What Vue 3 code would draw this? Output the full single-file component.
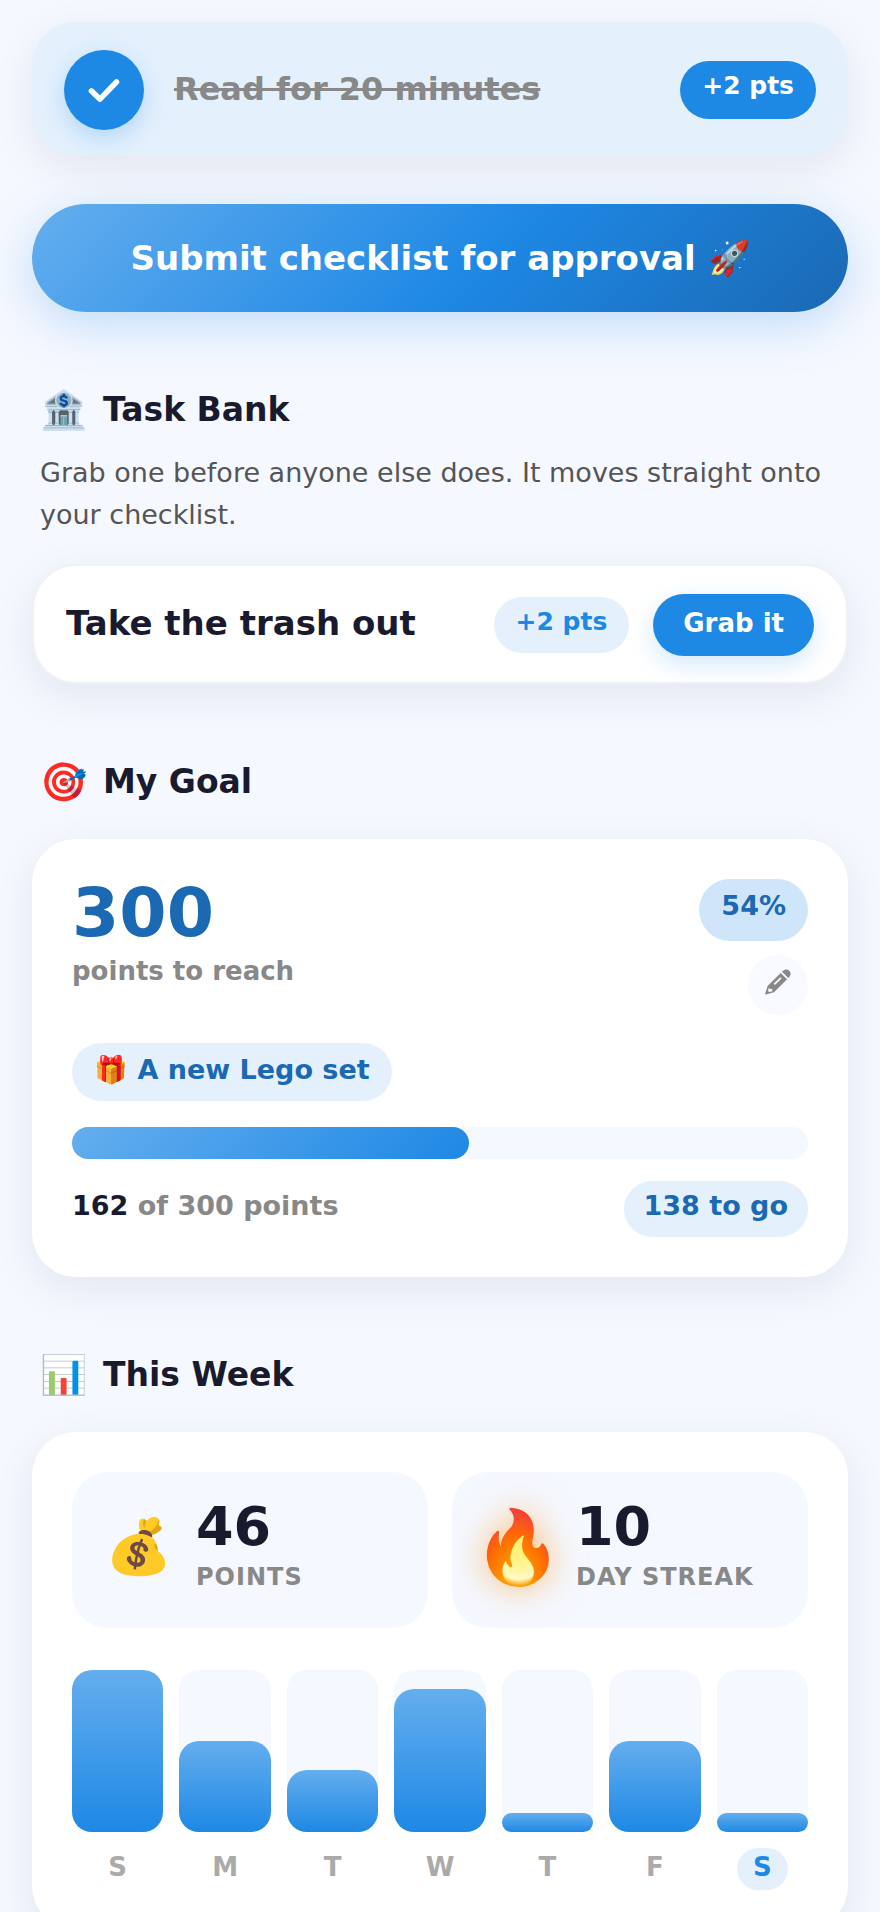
<script setup>
import { computed, ref } from 'vue'

const done = ref(true)

const goal = ref({ target: 300, earned: 162, reward: 'A new Lego set' })

const percent = computed(() => Math.round((goal.value.earned / goal.value.target) * 100))
const remaining = computed(() => goal.value.target - goal.value.earned)

const days = [
  { id: 'sun', label: 'S', fill: 100 },
  { id: 'mon', label: 'M', fill: 56 },
  { id: 'tue', label: 'T', fill: 38 },
  { id: 'wed', label: 'W', fill: 88 },
  { id: 'thu', label: 'T', fill: 12 },
  { id: 'fri', label: 'F', fill: 56 },
  { id: 'sat', label: 'S', fill: 12, today: true }
]
</script>

<template>
  <main class="page">
    <div class="task" :class="{ done }">
      <button class="check" type="button" aria-label="Toggle Read for 20 minutes" @click="done = !done">
        <svg v-if="done" viewBox="0 0 32 32" width="32" height="32" aria-hidden="true">
          <path d="M3.500 17 L12 25.200 L28.500 8" fill="none" stroke="#fff" stroke-width="5.500" stroke-linecap="round" stroke-linejoin="round" />
        </svg>
      </button>
      <span class="taskTitle">Read for 20 minutes</span>
      <span class="points">+2 pts</span>
    </div>

    <button class="submit" type="button">Submit checklist for approval 🚀</button>

    <section class="section">
      <h2 class="heading"><span class="emoji">🏦</span>Task Bank</h2>
      <p class="hint">Grab one before anyone else does. It moves straight onto your checklist.</p>
      <div class="bankItem">
        <span class="bankTitle">Take the trash out</span>
        <span class="points light">+2 pts</span>
        <button class="grab" type="button">Grab it</button>
      </div>
    </section>

    <section class="section">
      <h2 class="heading"><span class="emoji">🎯</span>My Goal</h2>
      <div class="card">
        <div class="goalTop">
          <div>
            <div class="goalNumber">{{ goal.target }}</div>
            <div class="goalCaption">points to reach</div>
          </div>
          <div class="goalSide">
            <span class="percent">{{ percent }}%</span>
            <button class="edit" type="button" aria-label="Edit goal">
              <svg viewBox="0 0 26 26" width="26" height="26" aria-hidden="true">
                <path fill="#888" d="M17.800 2 C19.800 -.2 22.500 0 24.300 1.800 C26 3.500 26.200 6 24.200 8 L23.300 8.900 L17 2.800 Z" />
                <path fill="#888" fill-rule="evenodd" d="M15.700 4.100 L22 10.300 L9 23.200 L.8 25.600 C.3 25.700 0 25.400 .1 24.900 L2.600 17 Z M3.800 19 L3 22 L4.200 23.100 L7.400 22.300 L7.200 20 L5.400 19.900 Z M8.600 14.800 L9.900 16 L16.600 9.400 L15.400 8.200 Z" />
              </svg>
            </button>
          </div>
        </div>
        <div class="reward">🎁 {{ goal.reward }}</div>
        <div class="progress" role="progressbar" :aria-valuenow="percent" aria-valuemin="0" aria-valuemax="100">
          <div class="progressFill" :style="{ width: percent + '%' }"></div>
        </div>
        <div class="goalFoot">
          <span class="earned"><strong>{{ goal.earned }}</strong> of {{ goal.target }} points</span>
          <span class="toGo">{{ remaining }} to go</span>
        </div>
      </div>
    </section>

    <section class="section">
      <h2 class="heading"><span class="emoji">📊</span>This Week</h2>
      <div class="card">
        <div class="stats">
          <div class="stat">
            <span class="statIcon">💰</span>
            <div>
              <div class="statValue">46</div>
              <div class="statLabel">Points</div>
            </div>
          </div>
          <div class="stat">
            <span class="statIcon fire">🔥</span>
            <div>
              <div class="statValue">10</div>
              <div class="statLabel">Day streak</div>
            </div>
          </div>
        </div>
        <div class="chart">
          <div v-for="day in days" :key="day.id" class="day">
            <div class="track">
              <div class="bar" :style="{ height: day.fill + '%' }"></div>
            </div>
            <span class="dayLabel" :class="{ today: day.today }">{{ day.label }}</span>
          </div>
        </div>
      </div>
    </section>
  </main>
</template>

<style>
body {
  margin: 0;
  background: #f5f8ff;
}
</style>

<style scoped>
.page {
  box-sizing: border-box;
  min-height: 100vh;
  padding: 22px 32px 0;
  font-family: 'DejaVu Sans', sans-serif;
  color: #1a1a2e;
}

button {
  border: none;
  padding: 0;
  font-family: inherit;
  font-weight: 700;
  cursor: pointer;
}

.task {
  display: flex;
  align-items: center;
  gap: 30px;
  padding: 28px 32px 26px;
  border-radius: 44px;
  background: #fff;
  box-shadow: 0 12px 40px rgba(26, 26, 46, 0.08);
}

.task.done {
  background: #e4f1fd;
}

.check {
  display: flex;
  align-items: center;
  justify-content: center;
  width: 80px;
  height: 80px;
  flex-shrink: 0;
  border-radius: 50%;
  background: #1e88e5;
  box-shadow: 0 8px 24px rgba(30, 136, 229, 0.25);
}

.taskTitle {
  flex: 1;
  padding-bottom: 2px;
  font-size: 32px;
  font-weight: 700;
}

.done .taskTitle {
  color: #888;
  text-decoration: line-through;
}

.points {
  padding: 9px 22px 17px;
  border-radius: 40px;
  background: #1e88e5;
  color: #fff;
  font-size: 25px;
  font-weight: 700;
  line-height: 32px;
}

.points.light {
  padding-bottom: 15px;
  background: #e4f1fd;
  color: #1e88e5;
}

.submit {
  display: block;
  width: 100%;
  margin-top: 48px;
  padding: 32px;
  border-radius: 54px;
  background: linear-gradient(135deg, #64aeee 0%, #1e88e5 55%, #1b69b3 100%);
  box-shadow: 0 12px 48px rgba(30, 136, 229, 0.25);
  color: #fff;
  font-size: 34px;
  line-height: 44px;
}

.section {
  margin-top: 73px;
}

.heading {
  display: flex;
  align-items: center;
  gap: 16px;
  margin: 0 8px;
  font-size: 33px;
  font-weight: 700;
  line-height: 50px;
}

.emoji {
  font-size: 38px;
}

.hint {
  margin: 17px 8px 28px;
  color: #555;
  font-size: 27px;
  line-height: 42px;
}

.bankItem {
  display: flex;
  align-items: center;
  gap: 24px;
  padding: 28px 32px 26px;
  border: 2px solid #f0f1f6;
  border-radius: 44px;
  background: #fff;
  box-shadow: 0 12px 40px rgba(26, 26, 46, 0.08);
}

.bankTitle {
  flex: 1;
  padding-bottom: 4px;
  font-size: 34px;
  font-weight: 700;
}

.grab {
  padding: 13px 30px 17px;
  border-radius: 40px;
  background: #1e88e5;
  box-shadow: 0 8px 24px rgba(30, 136, 229, 0.2);
  color: #fff;
  font-size: 26px;
  line-height: 32px;
}

.card {
  margin-top: 32px;
  padding: 40px;
  border-radius: 44px;
  background: #fff;
  box-shadow: 0 12px 40px rgba(26, 26, 46, 0.08);
}

.goalTop {
  display: flex;
  justify-content: space-between;
  align-items: flex-start;
}

.goalNumber {
  color: #1b69b3;
  font-size: 68px;
  font-weight: 700;
  line-height: 68px;
}

.goalCaption {
  margin-top: 8px;
  color: #888;
  font-size: 26px;
  font-weight: 700;
  line-height: 32px;
}

.goalSide {
  display: flex;
  flex-direction: column;
  align-items: flex-end;
  gap: 14px;
}

.percent {
  padding: 11px 22px 19px;
  border-radius: 40px;
  background: #cfe6fa;
  color: #1b69b3;
  font-size: 27px;
  font-weight: 700;
  line-height: 32px;
}

.edit {
  width: 60px;
  height: 60px;
  padding-bottom: 4px;
  border-radius: 50%;
  background: #f9faff;
}

.reward {
  width: fit-content;
  margin-top: 28px;
  padding: 11px 22px 15px;
  border-radius: 40px;
  background: #e4f1fd;
  color: #1b69b3;
  font-size: 27px;
  font-weight: 700;
  line-height: 32px;
}

.progress {
  height: 32px;
  margin: 26px 0 22px;
  border-radius: 16px;
  background: #f5f8ff;
}

.progressFill {
  height: 100%;
  border-radius: 16px;
  background: linear-gradient(135deg, #64aeee, #1e88e5);
}

.goalFoot {
  display: flex;
  justify-content: space-between;
  align-items: flex-start;
  font-size: 27px;
  font-weight: 700;
  line-height: 32px;
}

.earned {
  padding-top: 9px;
  color: #888;
}

.earned strong {
  color: #1a1a2e;
}

.toGo {
  padding: 9px 20px 15px;
  border-radius: 40px;
  background: #e4f1fd;
  color: #1b69b3;
}

.stats {
  display: grid;
  grid-template-columns: 1fr 1fr;
  gap: 24px;
}

.stat {
  display: flex;
  align-items: center;
  gap: 20px;
  padding: 25px 28px 31px;
  border-radius: 36px;
  background: #f5f8ff;
}

.statIcon {
  display: flex;
  justify-content: center;
  width: 76px;
  font-size: 54px;
  line-height: 76px;
}

.fire {
  font-size: 72px;
  filter: drop-shadow(0 0 18px rgba(255, 140, 0, 0.55));
}

.statValue {
  font-size: 54px;
  font-weight: 700;
  line-height: 60px;
}

.statLabel {
  color: #888;
  font-size: 24px;
  font-weight: 700;
  line-height: 40px;
  letter-spacing: 1px;
  text-transform: uppercase;
}

.chart {
  display: grid;
  grid-template-columns: repeat(7, 1fr);
  gap: 16px;
  margin-top: 42px;
}

.day {
  display: flex;
  flex-direction: column;
  align-items: center;
  gap: 16px;
}

.track {
  display: flex;
  align-items: flex-end;
  width: 100%;
  height: 162px;
  border-radius: 20px;
  background: #f5f8ff;
}

.bar {
  width: 100%;
  border-radius: 20px;
  background: linear-gradient(180deg, #64aeee, #1e88e5);
}

.dayLabel {
  padding: 3px 16px 7px;
  border-radius: 24px;
  color: #aaa;
  font-size: 26px;
  font-weight: 700;
  line-height: 32px;
}

.dayLabel.today {
  background: #e4f1fd;
  color: #1e88e5;
}
</style>
